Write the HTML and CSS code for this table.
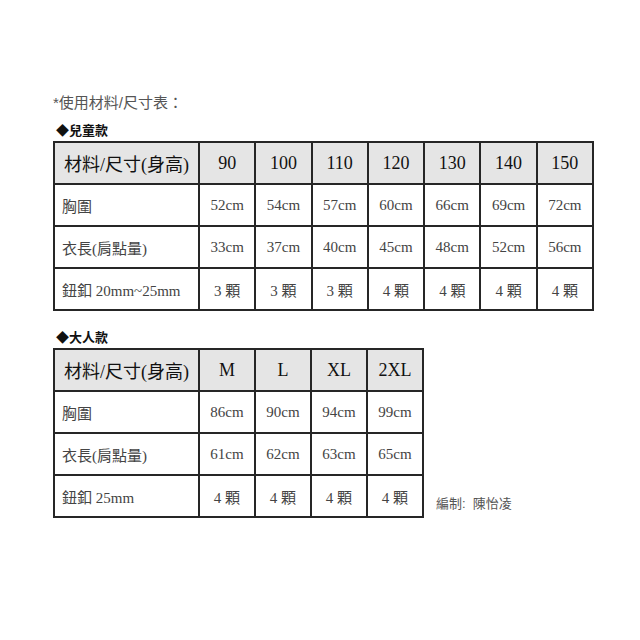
FILE: index.html
```html
<!DOCTYPE html>
<html lang="zh-Hant">
<head>
<meta charset="utf-8">
<link rel="stylesheet" href="styles.css">
</head>
<body>
<div class="page">
  <p class="title">*使用材料/尺寸表：</p>

  <p class="section">◆兒童款</p>
  <table class="size kids">
    <tr class="head">
      <th class="label">材料/尺寸(身高)</th><th>90</th><th>100</th><th>110</th><th>120</th><th>130</th><th>140</th><th>150</th>
    </tr>
    <tr>
      <td class="label">胸圍</td><td>52cm</td><td>54cm</td><td>57cm</td><td>60cm</td><td>66cm</td><td>69cm</td><td>72cm</td>
    </tr>
    <tr>
      <td class="label">衣長(肩點量)</td><td>33cm</td><td>37cm</td><td>40cm</td><td>45cm</td><td>48cm</td><td>52cm</td><td>56cm</td>
    </tr>
    <tr>
      <td class="label">鈕釦 20mm~25mm</td><td>3 顆</td><td>3 顆</td><td>3 顆</td><td>4 顆</td><td>4 顆</td><td>4 顆</td><td>4 顆</td>
    </tr>
  </table>

  <p class="section adult">◆大人款</p>
  <div class="adult-row">
    <table class="size adults">
      <tr class="head">
        <th class="label">材料/尺寸(身高)</th><th>M</th><th>L</th><th>XL</th><th>2XL</th>
      </tr>
      <tr>
        <td class="label">胸圍</td><td>86cm</td><td>90cm</td><td>94cm</td><td>99cm</td>
      </tr>
      <tr>
        <td class="label">衣長(肩點量)</td><td>61cm</td><td>62cm</td><td>63cm</td><td>65cm</td>
      </tr>
      <tr>
        <td class="label">鈕釦 25mm</td><td>4 顆</td><td>4 顆</td><td>4 顆</td><td>4 顆</td>
      </tr>
    </table>
    <p class="credit">編制:&nbsp; 陳怡凌</p>
  </div>
</div>
</body>
</html>
```

FILE: styles.css
```css
html, body {
  margin: 0;
  padding: 0;
  background: #ffffff;
}

.page {
  padding: 93px 0 0 53px;
  font-family: "Liberation Serif", "Noto Sans CJK TC", serif;
}

.title {
  margin: 0;
  font-family: "Liberation Sans", "Noto Sans CJK TC", sans-serif;
  font-size: 15px;
  line-height: 20px;
  color: #555555;
}

.section {
  margin: 9px 0 0 3px;
  font-family: "Liberation Sans", "Noto Sans CJK TC", sans-serif;
  font-size: 13px;
  font-weight: bold;
  line-height: 18px;
  color: #111111;
}

.section.adult {
  margin-top: 18px;
}

.size {
  border-collapse: collapse;
  table-layout: fixed;
  margin-top: 1px;
}

.size.kids {
  width: 541px;
}

.size.adults {
  width: 371px;
}

.size th,
.size td {
  border: 2px solid #262626;
  padding: 0 1px;
  text-align: center;
  white-space: nowrap;
}

.size th {
  height: 40px;
  background: #e5e5e5;
  font-size: 18px;
  font-weight: normal;
  color: #111111;
}

.size td {
  height: 40px;
  font-size: 15px;
  color: #444444;
}

.size .label {
  width: 130px;
  padding: 0 4px 0 7px;
  text-align: left;
}

.size th.label {
  padding-left: 9px;
}

.adult-row {
  display: flex;
  align-items: flex-end;
  gap: 12px;
}

.credit {
  margin: 0 0 5px 0;
  font-family: "Liberation Sans", "Noto Sans CJK TC", sans-serif;
  font-size: 13px;
  line-height: 18px;
  color: #555555;
}
```
